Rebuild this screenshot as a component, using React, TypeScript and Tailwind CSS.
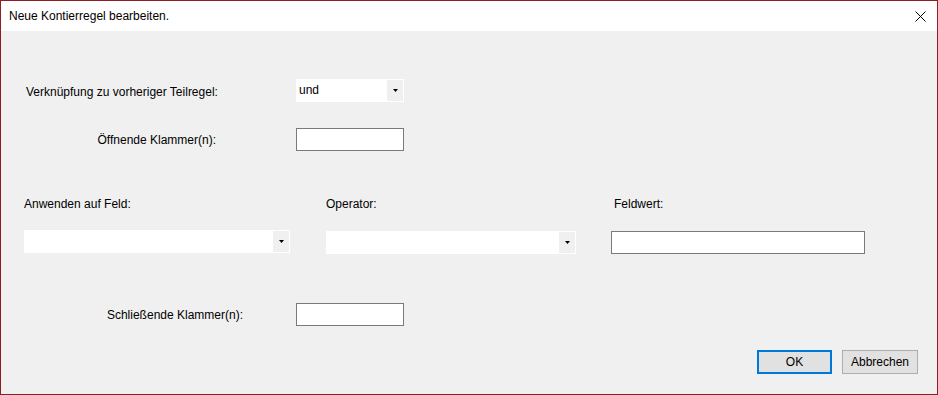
import React from 'react';

const font = { fontFamily: '"Liberation Sans", Arial, sans-serif' };

const ComboBox: React.FC<{ value?: string; width: string }> = ({ value, width }) => (
  <div className={`${width} h-[23px] bg-white p-[1px] flex`}>
    <div className="flex-1 pl-[2px] text-[12px] leading-[20px] text-black">{value}</div>
    <div className="w-[16px] bg-[#f0f0f0] flex items-center justify-center">
      <svg width="5" height="3" viewBox="0 0 5 3">
        <path d="M0 0h5L2.5 3z" fill="#000" />
      </svg>
    </div>
  </div>
);

const TextBox: React.FC<{ width: string }> = ({ width }) => (
  <div className={`${width} h-[23px] bg-white border border-[#7a7a7a]`} />
);

const App: React.FC = () => {
  return (
    <div style={font} className="w-[938px] h-[395px] border border-[#8f1d21] flex flex-col text-[12px] text-black select-none">
      {/* title bar */}
      <div className="h-[30px] bg-white flex items-center justify-between pl-[8px] pr-[10px]">
        <span className="text-[12px]">Neue Kontierregel bearbeiten.</span>
        <svg width="11" height="11" viewBox="0 0 11 11" className="mr-[1px]">
          <path d="M0.5 0.5L10.5 10.5M10.5 0.5L0.5 10.5" stroke="#000" strokeWidth="1" />
        </svg>
      </div>

      <div className="flex-1 bg-[#f0f0f0] flex flex-col">
        {/* Verknüpfung */}
        <div className="flex items-center mt-[48px] pl-[25px]">
          <div className="w-[270px] pt-[2px]">Verknüpfung zu vorheriger Teilregel:</div>
          <ComboBox value="und" width="w-[108px]" />
        </div>

        {/* Öffnende Klammer */}
        <div className="flex items-center mt-[26px] pl-[25px]">
          <div className="w-[270px] text-right pr-[80px] pt-[1px]">Öffnende Klammer(n):</div>
          <TextBox width="w-[108px]" />
        </div>

        {/* Feld / Operator / Feldwert */}
        <div className="flex mt-[46px] pl-[23px]">
          <div className="w-[302px] flex flex-col">
            <div className="h-[14px] leading-[14px]">Anwenden auf Feld:</div>
            <div className="mt-[19px]">
              <ComboBox width="w-[266px]" />
            </div>
          </div>
          <div className="w-[285px] flex flex-col">
            <div className="h-[14px] leading-[14px]">Operator:</div>
            <div className="mt-[20px]">
              <ComboBox width="w-[250px]" />
            </div>
          </div>
          <div className="flex flex-col">
            <div className="h-[14px] leading-[14px] pl-[3px]">Feldwert:</div>
            <div className="mt-[20px]">
              <TextBox width="w-[254px]" />
            </div>
          </div>
        </div>

        {/* Schließende Klammer */}
        <div className="flex items-center mt-[49px] pl-[25px]">
          <div className="w-[270px] text-right pr-[53px] pt-[1px]">Schließende Klammer(n):</div>
          <TextBox width="w-[108px]" />
        </div>

        {/* Buttons */}
        <div className="flex justify-end gap-[10px] mt-[24px] pr-[19px]">
          <button className="w-[75px] h-[24px] bg-[#e1e1e1] border-2 border-[#0078d7] text-[12px]">OK</button>
          <button className="w-[76px] h-[24px] bg-[#e1e1e1] border border-[#adadad] text-[12px]">Abbrechen</button>
        </div>
      </div>
    </div>
  );
};

export default App;
